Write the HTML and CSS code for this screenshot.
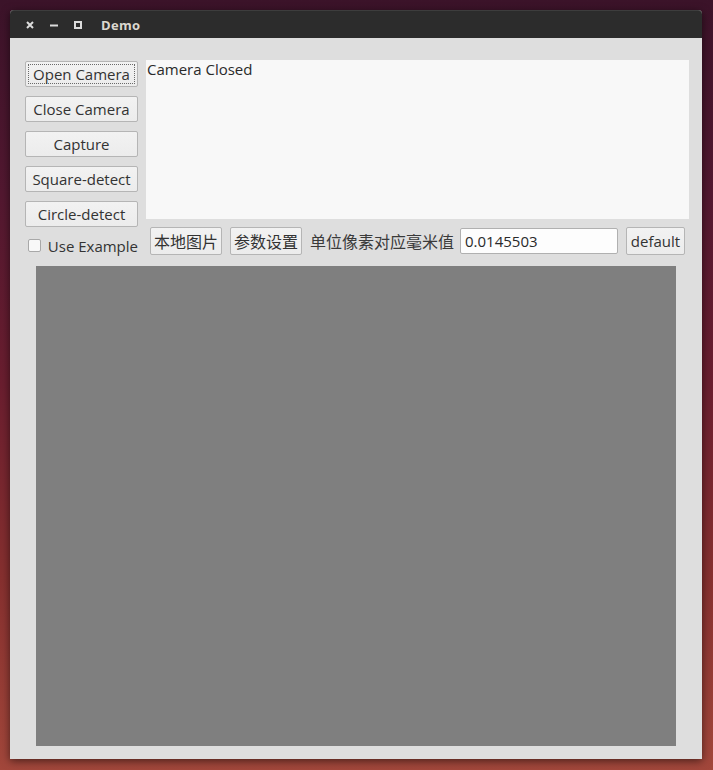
FILE: index.html
```html
<!DOCTYPE html>
<html>
<head>
<meta charset="utf-8">
<title>Demo</title>
<link rel="stylesheet" href="styles.css">
</head>
<body>
<div class="window">
  <div class="titlebar">
    <span class="tb-icon">
      <svg width="8" height="8" viewBox="0 0 8 8"><path d="M1 1L7 7M7 1L1 7" stroke="#dcdcdc" stroke-width="2"/></svg>
    </span>
    <span class="tb-icon">
      <svg width="8" height="8" viewBox="0 0 8 8"><path d="M0 4.5H8" stroke="#dcdcdc" stroke-width="2"/></svg>
    </span>
    <span class="tb-icon">
      <svg width="8" height="8" viewBox="0 0 8 8"><rect x="1" y="1" width="6" height="6" fill="none" stroke="#dcdcdc" stroke-width="2"/></svg>
    </span>
    <span class="tb-title">Demo</span>
  </div>
  <div class="content">
    <div class="top">
      <div class="left">
        <button class="btn focused"><span class="focus">Open Camera</span></button>
        <button class="btn">Close Camera</button>
        <button class="btn">Capture</button>
        <button class="btn">Square-detect</button>
        <button class="btn">Circle-detect</button>
        <label class="check"><span class="box"></span><span>Use Example</span></label>
      </div>
      <div class="right">
        <div class="log">Camera Closed</div>
        <div class="row">
          <button class="btn cjk">本地图片</button>
          <button class="btn cjk">参数设置</button>
          <span class="label cjk">单位像素对应毫米值</span>
          <input class="input" type="text" value="0.0145503">
          <button class="btn small">default</button>
        </div>
      </div>
    </div>
    <div class="view"></div>
  </div>
</div>
</body>
</html>
```

FILE: styles.css
```css
html, body {
  margin: 0;
  padding: 0;
}
body {
  width: 713px;
  height: 770px;
  overflow: hidden;
  background: linear-gradient(to bottom, #3b1329 0%, #521830 25%, #6a1e2f 50%, #86302f 75%, #a2473b 100%);
  font-family: "Open Sans", "Noto Sans CJK SC", sans-serif;
  color: #333333;
}
.window {
  margin: 10px 0 0 10px;
  width: 692px;
  height: 749px;
  background: #dedede;
  box-shadow: 0 2px 8px rgba(0, 0, 0, 0.55);
  border-radius: 4px 4px 0 0;
  display: flex;
  flex-direction: column;
}
.titlebar {
  flex: 0 0 28px;
  height: 28px;
  box-sizing: border-box;
  background: #2c2c2c;
  border-top: 1px solid #3d3d3d;
  border-radius: 4px 4px 0 0;
  display: flex;
  align-items: center;
  padding-left: 16px;
}
.tb-icon {
  width: 8px;
  height: 8px;
  margin-right: 16px;
  display: flex;
}
.tb-icon svg { display: block; }
.tb-title {
  margin-left: 3px;
  font-family: "Open Sans", sans-serif;
  font-weight: bold;
  font-size: 13px;
  color: #dcd8d0;
  letter-spacing: 0.3px;
}
.content {
  flex: 1;
  min-height: 0;
  display: flex;
  flex-direction: column;
  padding: 22px 13px 13px 15px;
}
.top {
  display: flex;
  gap: 8px;
  height: 195px;
  flex: 0 0 195px;
}
.left {
  width: 113px;
  display: flex;
  flex-direction: column;
  gap: 9px;
  padding-top: 1px;
}
.btn {
  height: 26px;
  flex: 0 0 auto;
  box-sizing: border-box;
  margin: 0;
  padding: 0 4px;
  background: linear-gradient(#f2f2f2, #ececec);
  border: 1px solid #b5b5b5;
  border-radius: 2px;
  font-family: "Open Sans", "Noto Sans CJK SC", sans-serif;
  font-size: 15px;
  color: #333333;
  display: flex;
  align-items: center;
  justify-content: center;
  white-space: nowrap;
}
.left .btn { width: 113px; }
.focused { padding: 2px; }
.focus {
  flex: 1;
  align-self: stretch;
  border: 1px dotted #6a6a6a;
  display: flex;
  align-items: center;
  justify-content: center;
}
.check {
  display: flex;
  align-items: center;
  gap: 7px;
  padding-left: 3px;
  height: 19px;
  font-size: 15px;
  white-space: nowrap;
}
.box {
  width: 13px;
  height: 13px;
  box-sizing: border-box;
  border: 1px solid #a8a8a8;
  border-radius: 2px;
  background: #f8f8f8;
}
.right {
  flex: 1;
  display: flex;
  flex-direction: column;
}
.log {
  height: 159px;
  background: #f8f8f8;
  padding: 0 1px;
  font-size: 15px;
  line-height: 19px;
  color: #2a2a2a;
}
.row {
  display: flex;
  align-items: center;
  gap: 8px;
  margin-top: 8px;
  padding: 0 4px;
  height: 28px;
}
.row .btn {
  height: 28px;
}
.cjk {
  font-family: "Noto Sans CJK SC", sans-serif;
  font-size: 16px;
}
.row .btn.cjk {
  width: 72px;
  padding: 0;
}
.label {
  color: #3a3a3a;
  white-space: nowrap;
  width: 142px;
  flex: 0 0 142px;
}
.input {
  width: 158px;
  flex: 0 0 158px;
  height: 26px;
  box-sizing: border-box;
  margin: 0;
  border: 1px solid #b0b0b0;
  border-radius: 2px;
  background: #fdfdfd;
  padding: 0 4px;
  font-family: "Open Sans", sans-serif;
  font-size: 15px;
  color: #2a2a2a;
  outline: none;
}
.small {
  width: 59px;
  padding: 0;
}
.view {
  margin: 11px 0 0 11px;
  width: 640px;
  height: 480px;
  flex: 0 0 480px;
  background: #7f7f7f;
}
```
